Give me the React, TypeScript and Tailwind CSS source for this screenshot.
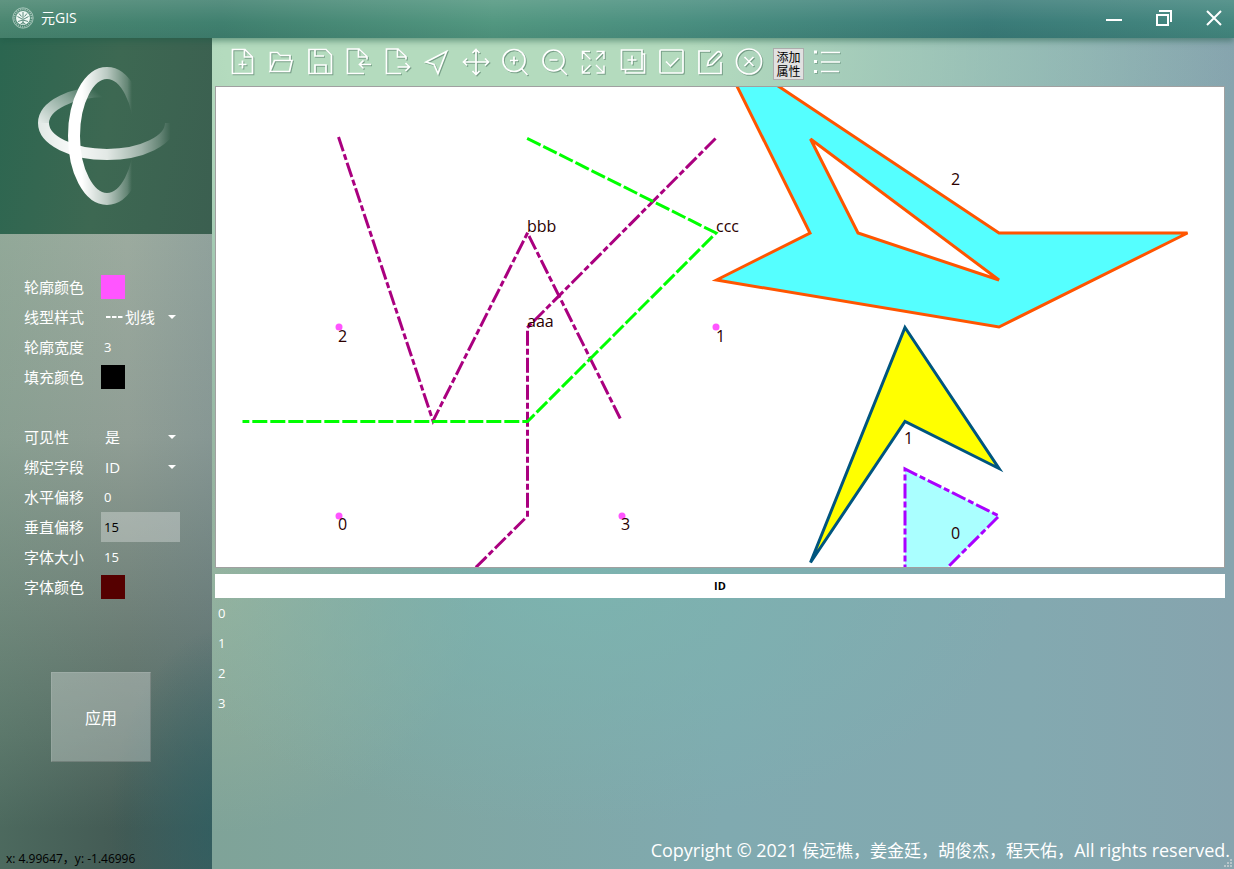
import React from "react";

const ICONS: { label: string; art: React.ReactNode }[] = [
  { label: "新建", art: <path d="M5.5 2.5H18L25.5 10V26.5H5.5Z M17.5 2.5V10H25.5 M15.5 13.5v8 M11.5 17.5h8" /> },
  { label: "打开", art: <path d="M4.5 24V5.5h7l3 3h9.5v5 M8.5 13.5h17.5l-2.5 11H4z" /> },
  { label: "保存", art: <path d="M4 2.5h17l5.5 5.5v18.500H4z M10 2.5v6.5h9 M10 26.5v-8.500h11v8.5" /> },
  { label: "导入", art: <path d="M20 26.5H3.5V2H15l8 7.5v3 M14.5 2v8h8.5 M27 17.5H15.5 M19.5 13.5l-4 4 4 4" /> },
  { label: "导出", art: <path d="M18 26.5H3.5V2H15l8 7.5v3 M14.5 2v8h8.5 M14.5 20H26.5 M22.5 16l4 4-4 4" /> },
  { label: "选择", art: <path d="M24.5 4.5L4 15l8 2.5 4 9z" /> },
  { label: "漫游", art: <path d="M15 2.5v25 M2.5 15h25 M11.5 6l3.5-3.5L18.5 6 M11.5 24l3.5 3.5 3.5-3.5 M6 11.5L2.5 15 6 18.5 M24 11.5l3.5 3.5-3.5 3.5" /> },
  { label: "放大", art: <><circle cx="14" cy="13.5" r="11" /><path d="M21.5 21.5l6 6.5 M14 9.5v8 M10 13.5h8" /></> },
  { label: "缩小", art: <><circle cx="14.5" cy="13.5" r="10.5" /><path d="M21.5 21.500l6.5 6.5 M10.500 13h8" /></> },
  { label: "全图", art: <path d="M4.5 12V4.5H12 M5 5l7.5 7.5 M18.5 4.5H26V12 M25.5 5L18 12.5 M4.5 18.5V26H12 M5 25.5l7.5-7.5 M18.5 26H26v-7.5 M25.5 25.5L18 18" strokeWidth="1.5" /> },
  { label: "添加图层", art: <path d="M4.5 3h20.500v19.500H4.500z M8.500 22.5v3.5h19V7h-2.500 M15 8.5v9 M10.500 13h9" /> },
  { label: "全选", art: <><rect x="4" y="3" width="23" height="23" rx="1" /><path d="M10 14.5l4.5 4.5 8-8" /></> },
  { label: "编辑", art: <path d="M15 4H4v22.500h22V15 M12.500 18.5l1-4.5L22.500 5q1.5-1 3 .5t.5 3L17 17.500z" /> },
  { label: "取消", art: <><circle cx="15" cy="14.5" r="12.5" /><path d="M10.5 10l9 9 M19.5 10l-9 9" /></> },
];

const IDS = [0, 1, 2, 3];
const labelClass = "w-[77px] text-[15px] leading-[30px]";
const fieldClass = "h-[30px] w-[79px] min-w-0 px-[3px] text-[13px] outline-none";

function Swatch({ id, label, color }: { id: string; label: string; color: string }) {
  return (
    <div className="flex h-[30px] items-center">
      <label htmlFor={id} className={labelClass}>{label}</label>
      <button id={id} className={`size-6 ${color}`} />
    </div>
  );
}

function Field({ id, label, value, active }: { id: string; label: string; value: string; active?: boolean }) {
  return (
    <div className="flex h-[30px] items-center">
      <label htmlFor={id} className={labelClass}>{label}</label>
      <input id={id} defaultValue={value} className={`${fieldClass} ${active ? "bg-white/30 text-black" : "bg-transparent text-white"}`} />
    </div>
  );
}

function Choice({ id, label, value, dashed }: { id: string; label: string; value: string; dashed?: boolean }) {
  return (
    <div className="flex h-[30px] items-center">
      <label htmlFor={id} className={labelClass}>{label}</label>
      <div className="flex w-[79px] items-center pl-1">
        {dashed && (
          <svg width="20" height="4" className="shrink-0" stroke="white" strokeWidth="2">
            <path d="M1 2h17" strokeDasharray="4.500 1.500" />
          </svg>
        )}
        <select id={id} className="min-w-0 flex-1 appearance-none bg-transparent text-[15px] outline-none">
          <option>{value}</option>
        </select>
        <svg width="8" height="4" className="mr-1 shrink-0" fill="white"><path d="M0 0h8L4 4z" /></svg>
      </div>
    </div>
  );
}

function Emblem() {
  return (
    <svg width="22" height="22" viewBox="0 0 22 22" fill="none" stroke="#e3f1ea">
      <circle cx="11" cy="11" r="10.2" strokeWidth=".8" opacity=".7" />
      <circle cx="11" cy="11" r="8.6" strokeWidth="1.8" strokeDasharray="1.2 1" opacity=".55" />
      <circle cx="11" cy="11" r="7" fill="#eef8f3" stroke="none" />
      <path d="M11 5v12.5 M9.5 9.5L7 6.5 M12.5 9.5L15 6.5 M10 12L5.5 9.5 M12 12l4.5-2.5 M11 13l-5 1.5 M11 13l5 1.5 M11 15.5l-2.5 1.5 M11 15.5l2.5 1.5" stroke="#4a7f6f" strokeWidth=".9" />
    </svg>
  );
}

function Logo() {
  return (
    <svg width="140" height="140" viewBox="36 66 140 140" fill="none">
      <defs>
        <linearGradient id="tall" gradientUnits="userSpaceOnUse" x1="68" y1="0" x2="146" y2="0">
          <stop offset="0" stopColor="#fff" />
          <stop offset=".18" stopColor="#fff" />
          <stop offset=".5" stopColor="#fff" stopOpacity=".65" />
          <stop offset=".76" stopColor="#fff" stopOpacity=".2" />
          <stop offset=".82" stopColor="#fff" stopOpacity="0" />
        </linearGradient>
        <linearGradient id="upper" gradientUnits="userSpaceOnUse" x1="44" y1="125" x2="84" y2="80">
          <stop offset="0" stopColor="#fff" stopOpacity=".85" />
          <stop offset=".6" stopColor="#fff" stopOpacity=".4" />
          <stop offset="1" stopColor="#fff" stopOpacity="0" />
        </linearGradient>
        <linearGradient id="lower" gradientUnits="userSpaceOnUse" x1="38" y1="0" x2="176" y2="0">
          <stop offset="0" stopColor="#fff" stopOpacity=".85" />
          <stop offset=".25" stopColor="#fff" stopOpacity=".97" />
          <stop offset=".5" stopColor="#fff" stopOpacity=".85" />
          <stop offset=".75" stopColor="#fff" stopOpacity=".5" />
          <stop offset=".88" stopColor="#fff" stopOpacity=".22" />
          <stop offset=".96" stopColor="#fff" stopOpacity="0" />
        </linearGradient>
      </defs>
      <path d="M43.5 123A63.5 31.5 0 0 1 107 91.5" stroke="url(#upper)" strokeWidth="11" />
      <ellipse cx="107" cy="136" rx="33" ry="63" stroke="url(#tall)" strokeWidth="12" />
      <path d="M43.5 123A63.5 31.5 0 0 0 170.5 123" stroke="url(#lower)" strokeWidth="11" />
    </svg>
  );
}

function MapView() {
  return (
    <svg className="block h-[480px] w-full bg-white" role="img" aria-label="地图">
      <g transform="translate(-216 -87)">
        <g strokeWidth="3" fillRule="evenodd">
          <path d="M716.5 280L810 233L716.5 45L999 233H1187.5L999 327Z M810.5 139L858 233L999 280Z" fill="#55ffff" stroke="#ff5500" />
          <path d="M905 327.5L999 468.5L905 421.5L810.5 562.5Z" fill="#ffff00" stroke="#00557f" />
          <path d="M905 469L999 516L905 610Z" fill="#aaffff" stroke="#aa00ff" strokeDasharray="12 6 3 6" strokeLinecap="square" />
        </g>
        <g strokeWidth="3" fill="none" strokeLinecap="square">
          <g stroke="#aa007f" strokeDasharray="12 6 3 6">
            <path d="M714.5 139.5L527.5 327.5V516L433 610" />
            <path d="M339 138.5L433 421L527.5 233L621.5 421" />
          </g>
          <path d="M528.5 139L716 233L527.5 421.5H244" stroke="#00ff00" strokeDasharray="12 6" />
        </g>
        <g fill="#ff55ff">
          <circle cx="339" cy="327" r="3.5" />
          <circle cx="716" cy="327" r="3.5" />
          <circle cx="339" cy="516" r="3.5" />
          <circle cx="622" cy="516" r="3.5" />
        </g>
        <g fill="#2b0000" fontSize="16">
          <text x="527" y="232">bbb</text>
          <text x="716" y="232">ccc</text>
          <text x="527" y="327">aaa</text>
          <text x="338" y="342">2</text>
          <text x="716" y="342">1</text>
          <text x="338" y="530">0</text>
          <text x="621" y="530">3</text>
          <text x="951" y="185">2</text>
          <text x="904" y="444">1</text>
          <text x="951" y="539">0</text>
        </g>
      </g>
    </svg>
  );
}

export default function App() {
  return (
    <div className="flex min-h-screen flex-col bg-[#82a9aa] font-['Open_Sans','Noto_Sans_CJK_SC',sans-serif] text-white">
      <header className="z-10 flex h-[38px] items-center justify-between bg-[linear-gradient(180deg,rgba(255,255,255,.12),rgba(255,255,255,0)_60%,rgba(0,40,40,.08)),linear-gradient(90deg,#4a8670,#40806f_18%,#529780_40%,#4a8f80_55%,#3a7b78_80%,#44877f)] pb-0.5 pl-3 pr-[11px] shadow-[0_3px_6px_rgba(30,90,70,.5)]">
        <div className="flex items-center gap-[7px]">
          <Emblem />
          <h1 className="text-sm">元GIS</h1>
        </div>
        <div className="flex items-center gap-8">
          <button aria-label="最小化"><svg width="18" height="18" stroke="white" strokeWidth="2"><path d="M1 11h16" /></svg></button>
          <button aria-label="还原"><svg width="18" height="18" fill="none" stroke="white" strokeWidth="2"><path d="M2 6h11v10H2z M4 2h12v11" /></svg></button>
          <button aria-label="关闭"><svg width="18" height="18" stroke="white" strokeWidth="2"><path d="M2 2l14 14M16 2L2 16" /></svg></button>
        </div>
      </header>

      <div className="flex flex-1">
        <aside className="flex w-[212px] shrink-0 flex-col bg-[radial-gradient(120px_200px_at_108%_95%,rgba(42,95,98,.75),transparent),linear-gradient(90deg,rgba(110,160,130,.22),transparent_60%,rgba(80,110,140,.15)),linear-gradient(180deg,#9cab9f_23%,#909e95_48%,#71827a_68%,#576d65_84%,#435a54_95%)]">
          <div className="flex h-[196px] items-center justify-center bg-[linear-gradient(100deg,#2b6650,#3d6852_50%,#3b5f50)]">
            <Logo />
          </div>
          <form className="flex flex-col pl-6 pt-[38px]">
            <Swatch id="stroke" label="轮廓颜色" color="bg-[#ff55ff]" />
            <Choice id="dash" label="线型样式" value="划线" dashed />
            <Field id="width" label="轮廓宽度" value="3" />
            <Swatch id="fill" label="填充颜色" color="bg-black" />
            <div className="h-[30px]" />
            <Choice id="visible" label="可见性" value="是" />
            <Choice id="field" label="绑定字段" value="ID" />
            <Field id="dx" label="水平偏移" value="0" />
            <Field id="dy" label="垂直偏移" value="15" active />
            <Field id="size" label="字体大小" value="15" />
            <Swatch id="color" label="字体颜色" color="bg-[#550000]" />
          </form>
          <button className="ml-[51px] mt-[70px] h-[90px] w-[100px] border border-white/10 border-b-black/15 border-r-black/15 bg-white/30 pt-0.5 text-base">应用</button>
          <p className="mt-auto pl-1.5 text-xs leading-[21px] text-black">x: 4.99647，y: -1.46996</p>
        </aside>

        <main className="relative flex min-w-0 flex-1 flex-col bg-[radial-gradient(780px_520px_at_24%_0%,#b4dbbe_30%,transparent),radial-gradient(440px_240px_at_36%_66%,rgba(124,181,176,.85),transparent),radial-gradient(280px_280px_at_0%_62%,rgba(157,181,157,.9),transparent),linear-gradient(90deg,#7fa398,#80aab0_50%,#83a9b0_80%,#86a4ae)] pl-[3px]">
          <div className="flex h-12 items-center px-[7px]">
            {ICONS.map(({ label, art }) => (
              <button key={label} aria-label={label} className="flex w-[39px] shrink-0 justify-center">
                <svg width="30" height="30" viewBox="0 0 30 30" fill="none" stroke="white" strokeWidth="1.7" className="drop-shadow-[1px_1px_0_rgba(70,110,90,.55)]">{art}</svg>
              </button>
            ))}
            <button className="ml-[5px] mr-1 mt-1 flex h-8 w-[31px] shrink-0 items-center border border-[#adadad] bg-[#e1e1e1] px-0.5 pt-0.5 text-xs leading-[14px] text-black">添加属性</button>
            <button aria-label="图层列表" className="flex w-[39px] shrink-0 justify-center">
              <svg width="28" height="30" viewBox="0 0 28 30" fill="none" stroke="white" strokeWidth="1.7" className="drop-shadow-[1px_1px_0_rgba(70,110,90,.4)]">
                <path d="M7 5.5h19 M7 15h19 M7 24.500h18" />
                <path d="M0 5h3 M0 14.500h3 M0 24.500h3" strokeWidth="3" />
              </svg>
            </button>
          </div>
          <div className="mr-[9px] border border-[#a0a0a0]"><MapView /></div>
          <div className="mr-[9px] mt-1.5">
            <table className="w-full border-collapse text-left text-[13px]">
              <thead><tr className="h-6 bg-white text-black"><th className="py-0 text-center text-[11px] font-bold">ID</th></tr></thead>
              <tbody>
                {IDS.map((id) => <tr key={id} className="h-[30px]"><td className="px-[3px] pb-0 pt-0.5">{id}</td></tr>)}
              </tbody>
            </table>
          </div>
          <footer className="mt-auto pb-1 pr-1 text-right text-lg leading-7">
            Copyright © 2021 <span className="text-[17px]">侯远樵，姜金廷，胡俊杰，程天佑，</span>All rights reserved.
          </footer>
          <svg className="absolute bottom-0.5 right-0.5" width="8" height="8" fill="#b9c6ca"><path d="M6 0h2v2H6z M3 3h2v2H3z M6 3h2v2H6z M0 6h2v2H0z M3 6h2v2H3z M6 6h2v2H6z" /></svg>
        </main>
      </div>
    </div>
  );
}
